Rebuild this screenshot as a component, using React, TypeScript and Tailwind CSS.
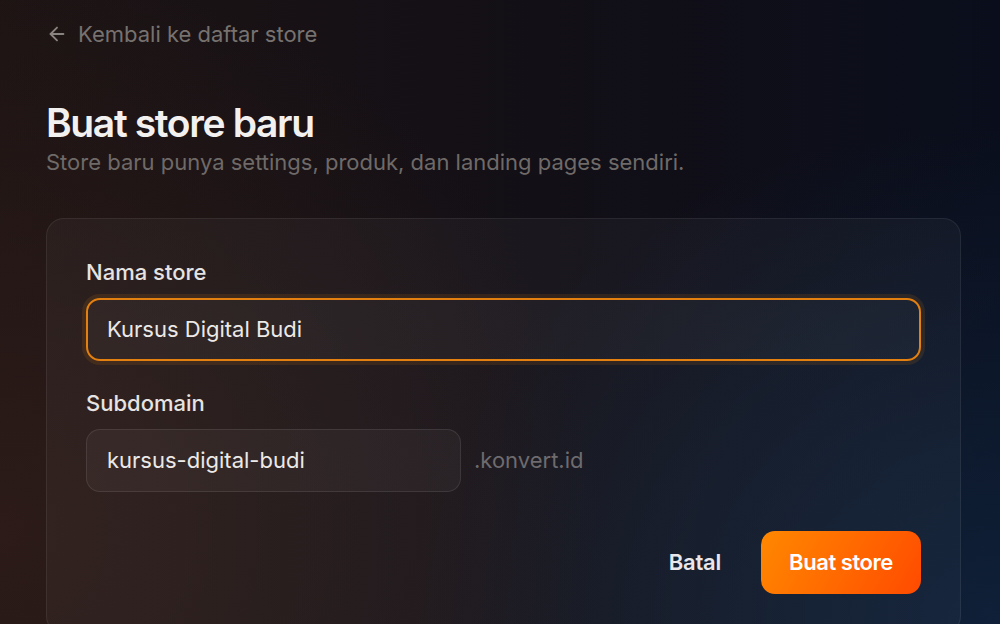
import { ArrowLeft } from 'lucide-react';

const font = { fontFamily: 'Inter, "Liberation Sans", sans-serif' };

export default function App() {
  return (
    <div
      className="h-[624px] w-[1000px] overflow-hidden bg-[#120f15] bg-[radial-gradient(ellipse_60%_90%_at_0%_85%,#2c1b18_0%,transparent_100%),radial-gradient(ellipse_60%_80%_at_100%_100%,#0f2038_0%,transparent_100%),linear-gradient(90deg,#1d1414_0%,#120f16_55%,#0a0e1c_100%)]"
      style={font}
    >
      <div className="flex w-[915px] flex-col pl-[46px] pt-5 box-content">
        {/* back link */}
        <a href="#" className="flex items-center gap-[10px] text-[22px] leading-7 text-[#77726f]">
          <ArrowLeft size={22} strokeWidth={2} className="text-[#8a8480]" />
          <span>Kembali ke daftar store</span>
        </a>

        <h1 className="mt-[51px] text-[39px] font-semibold leading-[48px] tracking-[-0.035em] text-[#f3f1f0]">
          Buat store baru
        </h1>
        <p className="mt-[1px] text-[22px] leading-7 text-[#6f6a68]">
          Store baru punya settings, produk, dan landing pages sendiri.
        </p>

        {/* card */}
        <div className="mt-[42px] rounded-[18px] border border-white/[0.07] bg-white/[0.035] p-[39px]">
          <label className="block text-[22px] font-medium leading-7 text-[#e6e3e1]">Nama store</label>
          <div className="mt-3 flex h-[63px] items-center rounded-[14px] border-2 border-[#e4800f] bg-white/[0.03] px-[19px] shadow-[0_0_0_4px_rgba(228,128,15,0.12)]">
            <span className="text-[22px] text-[#ece9e7]">Kursus Digital Budi</span>
          </div>

          <label className="mt-7 block text-[22px] font-medium leading-7 text-[#e6e3e1]">Subdomain</label>
          <div className="mt-3 flex items-center gap-[13px]">
            <div className="flex h-[63px] w-[375px] items-center rounded-[14px] border border-white/[0.09] bg-white/[0.04] px-5">
              <span className="text-[22px] text-[#ece9e7]">kursus-digital-budi</span>
            </div>
            <span className="text-[22px] text-[#6e6b6e]">.konvert.id</span>
          </div>

          <div className="mt-[39px] flex items-center justify-end gap-10">
            <button className="h-[63px] text-[22px] font-semibold tracking-[-0.01em] text-[#e9e7ea]">Batal</button>
            <button className="h-[63px] w-[160px] rounded-[14px] bg-[linear-gradient(120deg,#ff8800_0%,#ff6a00_50%,#ff4a00_100%)] text-[22px] font-semibold tracking-[-0.02em] text-white">
              Buat store
            </button>
          </div>
        </div>
      </div>
    </div>
  );
}
